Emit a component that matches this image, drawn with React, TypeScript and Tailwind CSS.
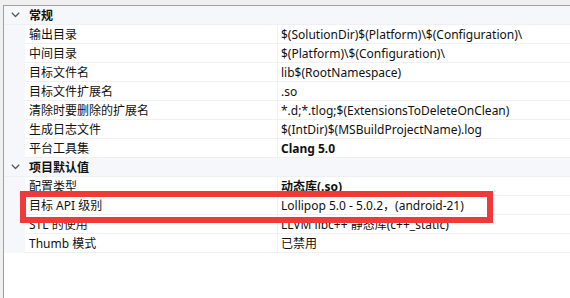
import React from "react";

type Row =
  | { kind: "cat"; label: string }
  | { kind: "prop"; label: string; value: string; bold?: boolean };

const rows: Row[] = [
  { kind: "cat", label: "常规" },
  { kind: "prop", label: "输出目录", value: "$(SolutionDir)$(Platform)\\$(Configuration)\\" },
  { kind: "prop", label: "中间目录", value: "$(Platform)\\$(Configuration)\\" },
  { kind: "prop", label: "目标文件名", value: "lib$(RootNamespace)" },
  { kind: "prop", label: "目标文件扩展名", value: ".so" },
  { kind: "prop", label: "清除时要删除的扩展名", value: "*.d;*.tlog;$(ExtensionsToDeleteOnClean)" },
  { kind: "prop", label: "生成日志文件", value: "$(IntDir)$(MSBuildProjectName).log" },
  { kind: "prop", label: "平台工具集", value: "Clang 5.0", bold: true },
  { kind: "cat", label: "项目默认值" },
  { kind: "prop", label: "配置类型", value: "动态库(.so)", bold: true },
  { kind: "prop", label: "目标 API 级别", value: "Lollipop 5.0 - 5.0.2，(android-21)" },
  { kind: "prop", label: "STL 的使用", value: "LLVM libc++ 静态库(c++_static)" },
  { kind: "prop", label: "Thumb 模式", value: "已禁用" },
];

function Chevron() {
  return (
    <svg width="9" height="6" viewBox="0 0 9 6" className="block">
      <polyline points="0.8,0.8 4.5,4.5 8.2,0.8" fill="none" stroke="#5a5a5a" strokeWidth="1.3" />
    </svg>
  );
}

export default function App() {
  return (
    <div
      className="w-[570px] h-[298px] bg-[#f0f0f0] pt-[5px] pl-[3px] flex flex-col relative overflow-hidden text-[12px] text-[#111]"
      style={{ fontFamily: '"Noto Sans", "Noto Sans CJK SC", sans-serif' }}
    >
      <div className="flex-1 bg-white border-t border-l border-[#a0a0a0] flex flex-col">
        {rows.map((r, i) =>
          r.kind === "cat" ? (
            <div key={i} className="h-[19px] flex items-center bg-[#f5f7fb] border-b border-[#eef0f4]">
              <div className="w-[21px] flex justify-center pl-[1px]">
                <Chevron />
              </div>
              <div className="pl-[4px] pt-[1px] font-bold leading-none">{r.label}</div>
            </div>
          ) : (
            <div key={i} className="h-[19px] flex">
              <div className="w-[21px] bg-[#f5f7fb]" />
              <div className="w-[252px] border-b border-[#f0f0f0] pl-[4px] pt-[1px] flex items-center leading-none whitespace-nowrap">
                {r.label}
              </div>
              <div
                className={`flex-1 border-b border-l border-[#f0f0f0] pl-[3px] pt-[1px] flex items-center leading-none whitespace-nowrap ${
                  r.bold ? "font-bold" : ""
                }`}
              >
                {r.value}
              </div>
            </div>
          )
        )}
      </div>
      <div className="absolute left-[20px] top-[191px] w-[473px] h-[32px] border-[6px] border-[#f03a3a]" />
    </div>
  );
}
